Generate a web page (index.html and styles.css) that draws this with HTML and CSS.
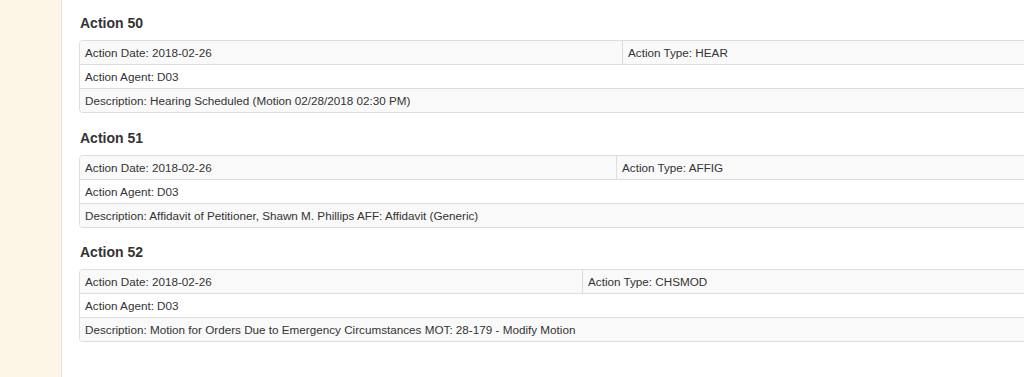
FILE: index.html
```html
<!DOCTYPE html>
<html>
<head>
<meta charset="utf-8">
<link rel="stylesheet" href="styles.css">
</head>
<body>
<div class="page">
  <aside class="side"></aside>
  <main class="content">
    <section class="action">
      <h3 class="action-title">Action 50</h3>
      <div class="tbl tbl-50">
        <div class="cell odd">Action Date: 2018-02-26</div>
        <div class="cell odd split">Action Type: HEAR</div>
        <div class="cell full">Action Agent: D03</div>
        <div class="cell odd full last">Description: Hearing Scheduled (Motion 02/28/2018 02:30 PM)</div>
      </div>
    </section>
    <section class="action">
      <h3 class="action-title">Action 51</h3>
      <div class="tbl tbl-51">
        <div class="cell odd">Action Date: 2018-02-26</div>
        <div class="cell odd split">Action Type: AFFIG</div>
        <div class="cell full">Action Agent: D03</div>
        <div class="cell odd full last">Description: Affidavit of Petitioner, Shawn M. Phillips AFF: Affidavit (Generic)</div>
      </div>
    </section>
    <section class="action">
      <h3 class="action-title">Action 52</h3>
      <div class="tbl tbl-52">
        <div class="cell odd">Action Date: 2018-02-26</div>
        <div class="cell odd split">Action Type: CHSMOD</div>
        <div class="cell full">Action Agent: D03</div>
        <div class="cell odd full last">Description: Motion for Orders Due to Emergency Circumstances MOT: 28-179 - Modify Motion</div>
      </div>
    </section>
  </main>
</div>
</body>
</html>
```
FILE: styles.css
```css
html, body {
  margin: 0;
  padding: 0;
  background: #ffffff;
  overflow: hidden;
}
body {
  font-family: "Liberation Sans", Arial, sans-serif;
  color: #333333;
}
.page {
  display: flex;
  width: 1024px;
  height: 377px;
}
.side {
  flex: 0 0 61px;
  background: #fdf6e6;
  border-right: 1px solid #e6e1d6;
}
.content {
  flex: 0 0 auto;
  padding: 0 0 0 17px;
  width: 1100px;
}
.action-title {
  margin: 14.5px 0 7px 1px;
  font-size: 14px;
  line-height: 20px;
  font-weight: bold;
  color: #333333;
}
.action:first-child .action-title {
  margin-top: 13px;
}
.tbl {
  display: grid;
  grid-template-columns: 542px 1fr;
  border: 1px solid #dddddd;
  border-radius: 4px;
  overflow: hidden;
  width: 1080px;
}
.tbl-51 { grid-template-columns: 536px 1fr; }
.tbl-52 { grid-template-columns: 502px 1fr; }
.cell {
  font-size: 11.7px;
  line-height: 15px;
  padding: 4px 5px;
  border-bottom: 1px solid #dddddd;
  background: #ffffff;
  white-space: nowrap;
}
.cell.odd { background: #f9f9f9; }
.cell.split { border-left: 1px solid #dddddd; }
.cell.full { grid-column: 1 / -1; }
.cell.last { border-bottom: none; }
```
